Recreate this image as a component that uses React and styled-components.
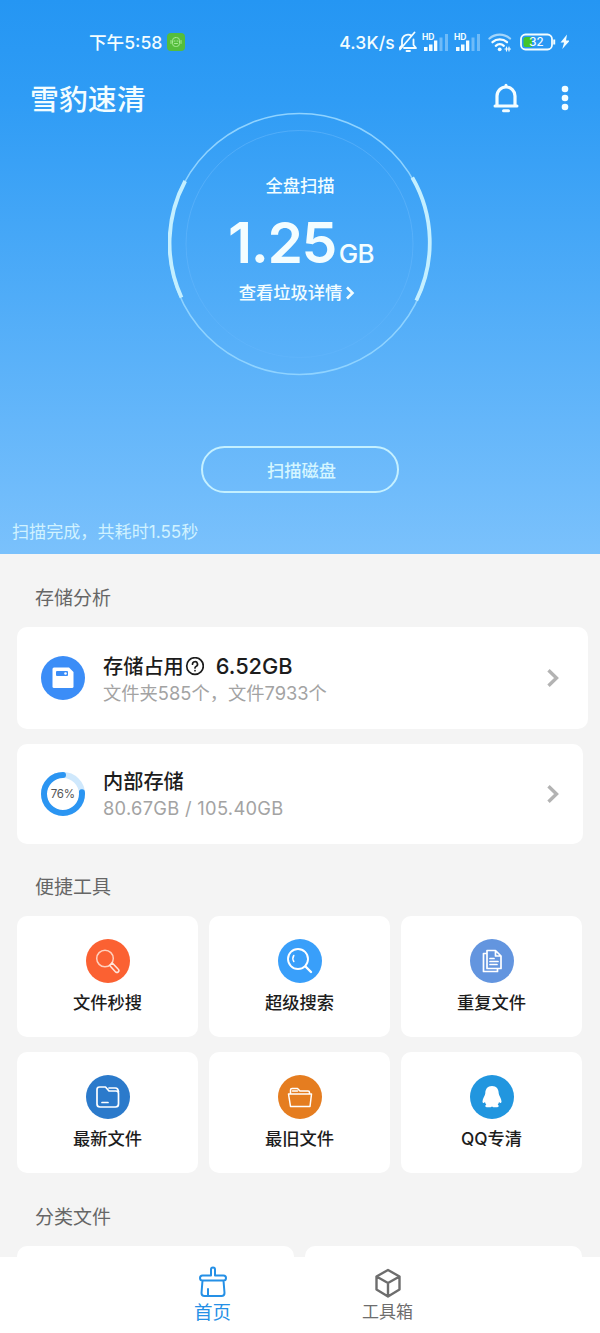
import React from 'react';
import styled, { createGlobalStyle } from 'styled-components';

const GlobalStyle = createGlobalStyle`
  * {
    box-sizing: border-box;
  }
  body {
    margin: 0;
    background: #f4f4f4;
    font-family: Inter, "Noto Sans CJK SC", sans-serif;
    color: #1c1c1c;
  }
`

const Screen = styled.div`
  width: 600px;
  height: 1333px;
  overflow: hidden;
  display: flex;
  flex-direction: column;
`
const Hero = styled.header`
  height: 554px;
  flex: none;
  background: linear-gradient(180deg, #2596f3 0%, #2f9cf5 18%, #7ac1fc 100%);
  color: #f3fdff;
  display: flex;
  flex-direction: column;
`
const StatusBar = styled.div`
  height: 84px;
  padding: 0 31px 0 89px;
  display: flex;
  align-items: center;
  font-size: 18px;
  font-weight: 500;
`
const Clock = styled.span`
  margin-bottom: 2px;
  font-size: 17.6px;
`
const Speed = styled.span`
  margin-left: auto;
  margin-right: 4px;
  font-size: 17.5px;
  letter-spacing: 0.2px;
`
const Badge = styled.span`
  width: 18px;
  height: 18px;
  margin-left: 5px;
  border-radius: 4px;
  background: #55bd3b;
  display: flex;
  align-items: center;
  justify-content: center;
`
const StatusIcons = styled.div`
  display: flex;
  align-items: center;
`
const TitleBar = styled.div`
  height: 28px;
  padding: 0 29px 0 30px;
  display: flex;
  align-items: center;
  justify-content: space-between;
`
const Title = styled.h1`
  margin: 4px 0 0;
  font-size: 28.9px;
  line-height: 28px;
  font-weight: 500;
`
const Actions = styled.div`
  display: flex;
  align-items: center;
  gap: 39px;
`
const Dial = styled.div`
  width: 264px;
  height: 264px;
  margin: 0 auto;
  display: grid;
  > * {
    grid-area: 1 / 1;
  }
`
const DialText = styled.div`
  display: flex;
  flex-direction: column;
  align-items: center;
  padding-top: 61px;
  font-size: 17.3px;
  line-height: 26px;
  font-weight: 500;
`
const Amount = styled.div`
  height: 64px;
  margin: 12px 0 5px 2px;
  font-size: 57px;
  line-height: 64px;
  font-weight: 600;
  letter-spacing: -1.5px;
  white-space: nowrap;
  small {
    font-size: 26px;
    letter-spacing: -0.7px;
    margin-left: 3px;
    font-weight: 500;
  }
`
const Details = styled.div`
  display: flex;
  align-items: center;
  gap: 2px;
  margin-right: 6px;
`
const ScanButton = styled.button`
  width: 198px;
  height: 47px;
  margin: 70px 0 0 201px;
  border: 2px solid #c4f0ff;
  border-radius: 24px;
  background: none;
  color: #d5f6ff;
  font: 500 17.3px Inter, "Noto Sans CJK SC", sans-serif;
  padding: 0 0 0 3px;
`
const ScanResult = styled.div`
  margin: 26px 0 0 12px;
  color: #d0f2ff;
  font-size: 17.1px;
  line-height: 26px;
`
const Content = styled.main`
  flex: 1;
  min-height: 0;
  overflow: hidden;
  padding: 0 18px 0 17px;
`
const SectionTitle = styled.h2`
  margin: 0 0 0 18px;
  height: ${props => props.h}px;
  padding-top: ${props => props.top}px;
  font-size: 19px;
  line-height: 28px;
  font-weight: 400;
  color: #666;
`
const StorageCard = styled.section`
  width: ${props => props.w}px;
  height: ${props => props.h}px;
  margin-bottom: 15px;
  padding: 0 ${props => props.w - 543}px 0 24px;
  border-radius: 10px;
  background: #fff;
  display: flex;
  align-items: center;
  > svg:last-child {
    margin-left: auto;
  }
`
const Info = styled.div`
  margin: ${props => props.top}px 0 0 18px;
`
const InfoTitle = styled.div`
  display: flex;
  align-items: center;
  font-size: 20.2px;
  line-height: 27px;
  font-weight: 500;
  b {
    font-size: 21.8px;
    font-weight: 500;
    margin-left: 12px;
  }
`
const InfoText = styled.div`
  font-size: 18.3px;
  line-height: 27px;
  color: #a3a3a3;
  letter-spacing: ${props => props.spacing || 0}px;
`
const Tools = styled.div`
  display: grid;
  grid-template-columns: repeat(3, 181px);
  gap: 15px 11px;
`
const Tool = styled.div`
  height: 121px;
  border-radius: 10px;
  background: #fff;
  padding-top: 23px;
  display: flex;
  flex-direction: column;
  align-items: center;
  font-size: 17.3px;
  line-height: 26px;
  font-weight: 500;
`
const ToolIcon = styled.div`
  width: 44px;
  height: 44px;
  margin-bottom: 7px;
  border-radius: 50%;
  background: ${props => props.color};
  svg {
    display: block;
  }
`
const Categories = styled.div`
  display: flex;
  gap: 11px;
`
const Category = styled.div`
  flex: 1;
  height: 80px;
  border-radius: 10px;
  background: #fff;
`
const TabBar = styled.nav`
  flex: none;
  height: 76px;
  background: #fff;
  display: flex;
  justify-content: center;
`
const Tab = styled.div`
  width: 175px;
  padding-top: 9px;
  display: flex;
  flex-direction: column;
  align-items: center;
  font-size: ${props => (props.active ? 18.5 : 17)}px;
  line-height: 26px;
  color: ${props => (props.active ? '#2590e6' : '#6d6d6d')};
  svg {
    margin-top: -1px;
  }
`

const line = {
  fill: 'none',
  stroke: 'currentColor',
  strokeLinecap: 'round',
  strokeLinejoin: 'round',
}

const Signal = () => (
  <svg width="32" height="24" viewBox="0 0 32 24" fill="currentColor">
    <text x="3" y="9.5" fontSize="8.5" fontWeight="700" textLength="12.5" lengthAdjust="spacingAndGlyphs">HD</text>
    <path d="M5 17h3.5v4H5zM10 14.5h3.5V21H10zM15 10.5h3.3V21H15z" />
    <path d="M20.500 7.500h3V21h-3zM26 4h3v17h-3z" opacity="0.35" />
  </svg>
)

const StatusRight = () => (
  <StatusIcons>
    <svg width="20" height="24" viewBox="1 0 20 24" {...line} strokeWidth="1.8">
      <path d="M4 16V10.500a6 6 0 0 1 9.500-4.700M15.500 9.500V15l2.500 3H6M2 19.500L16.500 2.500M8.500 21h3.500M1.500 18L4 15.500" />
    </svg>
    <Signal />
    <Signal />
    <svg width="31" height="24" viewBox="-3 0 31 24" {...line} strokeWidth="2.3">
      <path d="M3.500 8.500a15.500 15.500 0 0 1 20.500 0" opacity="0.6" />
      <path d="M6.500 12.200a11 11 0 0 1 14.500 0M9.800 15.800a6 6 0 0 1 8 0" />
      <circle cx="13.7" cy="19.3" r="1.9" fill="currentColor" stroke="none" />
      <path d="M19 19h5.500M20.500 17v4M23 17v4" strokeWidth="1.2" />
    </svg>
    <svg width="55" height="24" viewBox="-2 0 55 24">
      <rect x="5" y="4.5" width="31" height="15" rx="4.5" fill="none" stroke="currentColor" strokeWidth="1.8" />
      <path d="M10 7h6v10h-6a2.500 2.500 0 0 1-2.500-2.500v-5A2.500 2.500 0 0 1 10 7z" fill="#42c52c" />
      <path d="M38.200 9.500v5" stroke="currentColor" strokeWidth="2" />
      <text x="20.5" y="16.2" fontSize="11.5" fontWeight="500" textAnchor="middle" fill="currentColor">32</text>
      <path d="M51 4.500L44.500 12.500h3.600l-1.800 6.500 7.500-8.500h-3.800z" fill="currentColor" />
    </svg>
  </StatusIcons>
)

const Bell = () => (
  <svg width="28" height="30" viewBox="0 0 28 30" {...line} strokeWidth="3.2">
    <path d="M5 22v-9a9 9 0 0 1 18 0V22" />
    <path d="M3 23h22M11.500 27.800h5M14 2.200v1" strokeWidth="3" />
  </svg>
)

const More = () => (
  <svg width="12" height="28" viewBox="0 0 12 28" fill="currentColor">
    <circle cx="6" cy="5" r="3.3" />
    <circle cx="6" cy="14" r="3.3" />
    <circle cx="6" cy="23" r="3.3" />
  </svg>
)

const Rings = () => (
  <svg width="264" height="264" viewBox="0 0 264 264" {...line} strokeLinecap="butt">
    <circle cx="131.5" cy="132" r="130.5" stroke="#8fd3ff" strokeWidth="1.6" />
    <circle cx="131.5" cy="132" r="113.5" stroke="#62b5fb" strokeWidth="1" opacity="0.6" />
    <path d="M17.200 69a130.500 130.500 0 0 0-3.700 116.500M244.300 65.500a130.500 130.500 0 0 1 4 123" stroke="#c4efff" strokeWidth="3.8" />
  </svg>
)

const Chevron = () => (
  <svg width="14" height="20" viewBox="0 0 14 20" fill="none" stroke="#b3b3b3" strokeWidth="3.4">
    <path d="M2.500 2.200l8 7.800-8 7.800" />
  </svg>
)

const Percent = ({ value }) => {
  const len = 2 * Math.PI * 19
  return (
    <svg width="44" height="44" viewBox="0 0 44 44" fill="none">
      <circle cx="22" cy="22" r="19" stroke="#cfe8fc" strokeWidth="6" />
      <circle
        cx="22" cy="22" r="19" stroke="#2b95f2" strokeWidth="6" strokeLinecap="round"
        strokeDasharray={`${len * value / 100} ${len}`}
        transform="matrix(0 -1 -1 0 44 44)"
      />
      <text x="21.700" y="26.200" fontSize="11.5" letterSpacing="-0.300" textAnchor="middle" fill="#555">{value}%</text>
    </svg>
  )
}

const tools = [
  {
    name: '文件秒搜',
    color: '#fb6132',
    icon: (
      <>
        <circle cx="19" cy="19.5" r="8.3" stroke="#ffd0bd" strokeWidth="1.5" />
        <path d="M23.700 26.500l2.600-2.600 6 6.300a1.900 1.900 0 0 1-2.700 2.700z" stroke="#ffe5dc" strokeWidth="1.5" />
      </>
    ),
  },
  {
    name: '超级搜索',
    color: '#399ffa',
    icon: (
      <>
        <circle cx="20" cy="20" r="10" strokeWidth="1.9" />
        <path d="M27.500 27.500l5.500 5.500" strokeWidth="2.4" />
        <path d="M15.800 16.500a5.500 5.500 0 0 0 0 6" strokeWidth="1.5" />
      </>
    ),
  },
  {
    name: '重复文件',
    color: '#6395df',
    icon: <path d="M17 11.500h8.500l5.500 5.500v12.500H17zM25.500 11.500V17H31M17 14.500h-3.500V32.500h14V29.500M20 19.500h4M20 22.500h8M20 25.500h7" strokeWidth="1.7" />,
  },
  {
    name: '最新文件',
    color: '#2b7acb',
    icon: <path d="M13.500 12h6l3.500 4h7a2.500 2.500 0 0 1 2.500 2.500V29a3 3 0 0 1-3 3H14a3 3 0 0 1-3-3V14.500a2.500 2.500 0 0 1 2.500-2.500zM23 13h6.500q2.500 0 3 3.500M16 27.500h6" strokeWidth="1.7" />,
  },
  {
    name: '最旧文件',
    color: '#e57d20',
    icon: <path d="M10.500 19h23l-1.500 12.500H12.500zM12.500 19v-4q0-1.500 1.500-1.500h5.500l2.500 2.500h8q1.500 0 1.500 1.500V19M14.500 16h5" strokeWidth="1.5" />,
  },
  {
    name: 'QQ专清',
    color: '#2196df',
    icon: <path d="M22 11c-4.500 0-6.700 3.200-6.700 7.200 0 2.500-2.800 4.800-2.800 8.300 0 1.500 1 2.300 2.500.5.200 1.300.7 1.900 1.300 2.500-1.500.7-1.300 2.800.7 2.800h3.700l1.300-.8 1.300.8H27c2 0 2.200-2.100.7-2.800.6-.6 1.100-1.200 1.300-2.500 1.500 1.800 2.500 1 2.500-.5 0-3.500-2.800-5.800-2.800-8.300 0-4-2.200-7.200-6.700-7.200z" fill="#fff" stroke="none" />,
  },
]

export default function App() {
  return (
    <Screen>
      <GlobalStyle />
      <Hero>
        <StatusBar>
          <Clock>下午5:58</Clock>
          <Badge>
            <svg width="12" height="12" viewBox="0 0 12 12" {...line} stroke="#a5e994" strokeWidth="1">
              <rect x="2.5" y="1.5" width="7" height="9" rx="3" />
              <path d="M1 4.500v3M11 4.500v3M4 5h1M7 5h1M4.500 7.500h3" />
            </svg>
          </Badge>
          <Speed>4.3K/s</Speed>
          <StatusRight />
        </StatusBar>
        <TitleBar>
          <Title>雪豹速清</Title>
          <Actions>
            <Bell />
            <More />
          </Actions>
        </TitleBar>
        <Dial>
          <Rings />
          <DialText>
            <span>全盘扫描</span>
            <Amount>1.25<small>GB</small></Amount>
            <Details>
              查看垃圾详情
              <svg width="11" height="14" viewBox="0 0 11 14" fill="none" stroke="currentColor" strokeWidth="2.6">
                <path d="M3 1.500L8.500 7 3 12.500" />
              </svg>
            </Details>
          </DialText>
        </Dial>
        <ScanButton>扫描磁盘</ScanButton>
        <ScanResult>扫描完成，共耗时1.55秒</ScanResult>
      </Hero>
      <Content>
        <SectionTitle h={73} top={31}>存储分析</SectionTitle>
        <StorageCard w={571} h={102}>
          <svg width="44" height="44" viewBox="0 0 44 44">
            <circle cx="22" cy="22" r="22" fill="#3b8df7" />
            <path d="M13 11.500h15l4.500 4.500v14.500a1.500 1.500 0 0 1-1.500 1.500H13a1.500 1.500 0 0 1-1.500-1.500V13a1.500 1.500 0 0 1 1.500-1.500z" fill="#fff" />
            <rect x="15" y="15" width="12" height="5" rx="1" fill="#3b8df7" />
            <circle cx="24.5" cy="17.5" r="1.3" fill="#fff" />
          </svg>
          <Info top={4}>
            <InfoTitle>
              存储占用
              <svg width="20" height="20" viewBox="0 0 20 20" {...line} strokeWidth="1.7">
                <circle cx="11" cy="9" r="8.3" />
                <path d="M8.500 7.200a2.500 2.500 0 1 1 3.500 2.300q-1 .5-1 1.500M11 13.500v.2" />
              </svg>
              <b>6.52GB</b>
            </InfoTitle>
            <InfoText>文件夹585个，文件7933个</InfoText>
          </Info>
          <Chevron />
        </StorageCard>
        <StorageCard w={566} h={100}>
          <Percent value={76} />
          <Info top={2}>
            <InfoTitle>内部存储</InfoTitle>
            <InfoText spacing={0.3}>80.67GB / 105.40GB</InfoText>
          </Info>
          <Chevron />
        </StorageCard>
        <SectionTitle h={57} top={15}>便捷工具</SectionTitle>
        <Tools>
          {tools.map(tool => (
            <Tool key={tool.name}>
              <ToolIcon color={tool.color}>
                <svg width="44" height="44" viewBox="0 0 44 44" {...line} stroke="#fff">{tool.icon}</svg>
              </ToolIcon>
              {tool.name}
            </Tool>
          ))}
        </Tools>
        <SectionTitle h={73} top={31}>分类文件</SectionTitle>
        <Categories>
          <Category />
          <Category />
        </Categories>
      </Content>
      <TabBar>
        <Tab active>
          <svg width="32" height="34" viewBox="0 0 32 34" {...line} strokeWidth="2">
            <path d="M14 10.500V4.500a2 2 0 0 1 4 0V10.500h8.500q2.500 0 2.500 2.500T26.500 15.500h-21Q3 15.500 3 13T5.500 10.500zM5.500 15.500L4.500 28q0 3 3 3h17q3 0 3-3l-1-12.500M11 31v-7" />
          </svg>
          首页
        </Tab>
        <Tab>
          <svg width="32" height="34" viewBox="0 0 32 34" {...line} strokeWidth="2.4">
            <path d="M16 5l11.500 6.500v13L16 31.500 4.500 24.500v-13zM4.500 11.500L16 18l11.500-6.500M16 18v13.500" />
          </svg>
          工具箱
        </Tab>
      </TabBar>
    </Screen>
  )
}
